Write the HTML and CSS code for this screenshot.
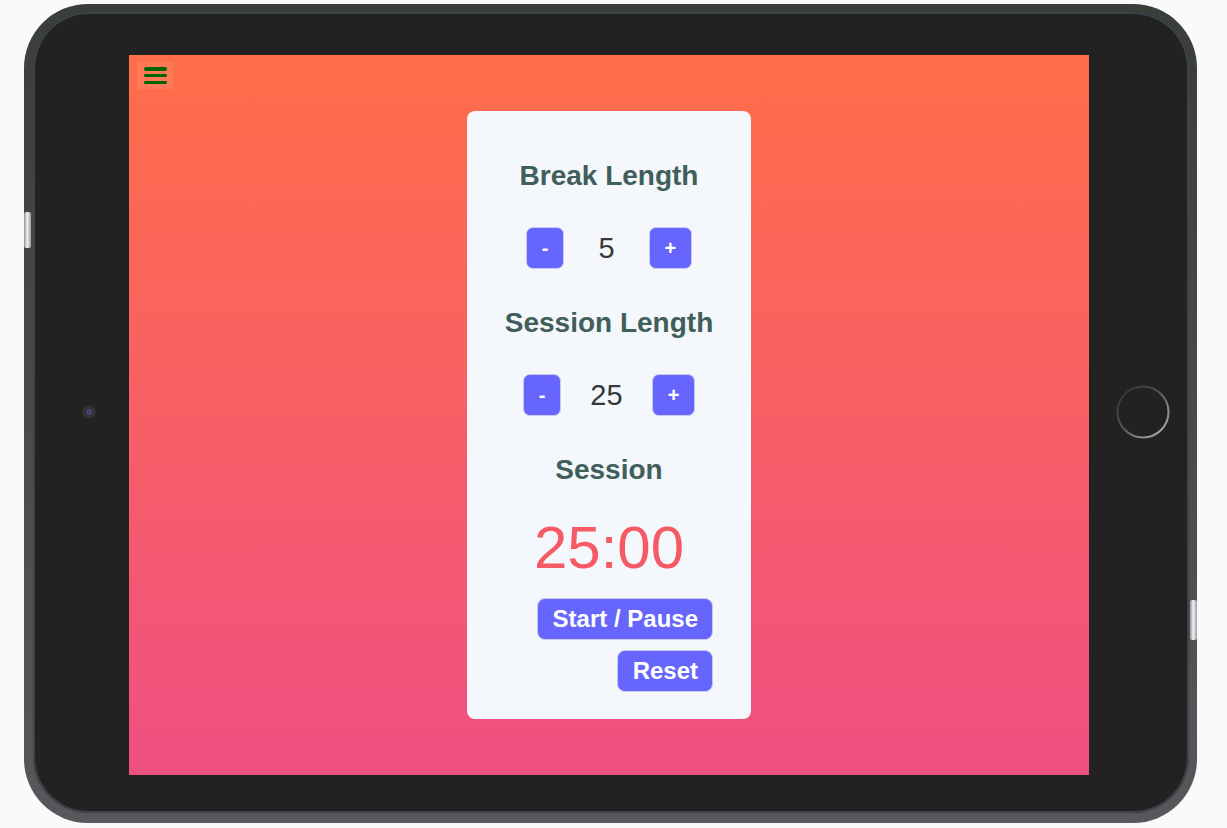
FILE: index.html
```html
<!DOCTYPE html>
<html lang="en">
<head>
<meta charset="utf-8">
<title>Pomodoro Clock</title>
<link rel="stylesheet" href="styles.css">
</head>
<body>
<div class="device">
  <span class="side-btn side-btn-left"></span>
  <span class="side-btn side-btn-right"></span>
  <div class="bezel">
    <span class="camera"></span>
    <svg class="home" width="56" height="56" viewBox="0 0 56 56" aria-hidden="true">
      <defs>
        <linearGradient id="hg" x1="0" y1="0" x2="1" y2="1">
          <stop offset="0" stop-color="#2a2a2a"/>
          <stop offset="0.45" stop-color="#555"/>
          <stop offset="1" stop-color="#bdbdbd"/>
        </linearGradient>
      </defs>
      <circle cx="28" cy="28" r="25.5" fill="none" stroke="url(#hg)" stroke-width="2"/>
    </svg>
    <div class="screen">
      <button class="menu" aria-label="Menu">
        <span class="bar"></span><span class="bar"></span><span class="bar"></span>
      </button>
      <div class="card">
        <h2 class="label">Break Length</h2>
        <div class="control">
          <button class="step">-</button>
          <span class="value value-break">5</span>
          <button class="step">+</button>
        </div>
        <h2 class="label">Session Length</h2>
        <div class="control">
          <button class="step">-</button>
          <span class="value value-session">25</span>
          <button class="step">+</button>
        </div>
        <h2 class="label label-timer">Session</h2>
        <div class="timer">25:00</div>
        <div class="actions">
          <button class="action">Start / Pause</button>
          <button class="action">Reset</button>
        </div>
      </div>
    </div>
  </div>
</div>
</body>
</html>
```
FILE: styles.css
```css
* { box-sizing: border-box; }

html, body {
  margin: 0;
  padding: 0;
  background: #fafafa;
  font-family: "Liberation Sans", Arial, sans-serif;
}

body {
  padding: 4px 0 0 24px;
  height: 828px;
  overflow: hidden;
}

.device {
  position: relative;
  width: 1173px;
  height: 819px;
  padding: 8px 8px 10px 9px;
  border-radius: 64px;
  background: linear-gradient(#3a3e3a, #56585b);
}

.side-btn {
  position: absolute;
  width: 7px;
  background: linear-gradient(90deg, #8a8d92, #f2f2f2 45%, #9a9ca0);
  border-radius: 2px;
}
.side-btn-left { left: 0; top: 208px; height: 36px; }
.side-btn-right { right: 0; top: 596px; height: 40px; }

.bezel {
  position: relative;
  width: 100%;
  height: 100%;
  background: #222222;
  border-radius: 56px;
  box-shadow: inset 0 0 0 2px #3f434b;
  padding: 43px 100px 38px 96px;
}

.camera {
  position: absolute;
  left: 49px;
  top: 393px;
  width: 14px;
  height: 14px;
  border-radius: 50%;
  background: radial-gradient(circle, #4a4370 0 2.5px, #2f2f38 3.5px, #38383c 5px, #2a2a2c 7px);
}

.home {
  position: absolute;
  left: 1082px;
  top: 372px;
}

.screen {
  position: relative;
  width: 960px;
  height: 720px;
  background: linear-gradient(#ff6e49, #ee5082);
  display: flex;
  align-items: center;
  justify-content: center;
}

.menu {
  position: absolute;
  left: 8px;
  top: 7px;
  width: 36px;
  height: 27px;
  padding: 5px 7px;
  border: 0;
  background: rgba(255, 255, 255, 0.08);
  display: flex;
  flex-direction: column;
  justify-content: space-between;
}
.bar {
  display: block;
  width: 23px;
  height: 3.5px;
  border-radius: 2px;
  background: #006400;
}

.card {
  width: 284px;
  background: #f4f7fb;
  border-radius: 8px;
  padding: 47px 0 27px;
  display: flex;
  flex-direction: column;
  align-items: center;
}

.label {
  margin: 0;
  height: 32px;
  padding-top: 3px;
  font-size: 28px;
  line-height: 29px;
  font-weight: bold;
  color: #405e5a;
}

.control {
  margin: 37px 0 36px;
  display: flex;
  align-items: center;
  height: 42px;
}

.step {
  height: 42px;
  padding: 0 15px;
  border: 1px solid #c9c9ee;
  border-radius: 7px;
  background: #6665fe;
  color: #ffffff;
  font-family: "Liberation Sans", Arial, sans-serif;
  font-size: 20px;
  font-weight: bold;
}

.value {
  font-size: 29px;
  color: #383838;
  line-height: 42px;
}
.value-break { margin: 0 34px; }
.value-session { margin: 0 29px; }

.label-timer { margin-bottom: 29px; }

.timer {
  font-size: 60px;
  line-height: 69px;
  color: #f55a65;
}

.actions {
  align-self: stretch;
  margin-top: 16px;
  padding-right: 38px;
  display: flex;
  flex-direction: column;
  align-items: flex-end;
  gap: 10px;
}

.action {
  height: 42px;
  padding: 0 14px 0 15px;
  border: 1px solid #c9c9ee;
  border-radius: 8px;
  background: #6665fe;
  color: #ffffff;
  font-family: "Liberation Sans", Arial, sans-serif;
  font-size: 24px;
  font-weight: bold;
}
```
